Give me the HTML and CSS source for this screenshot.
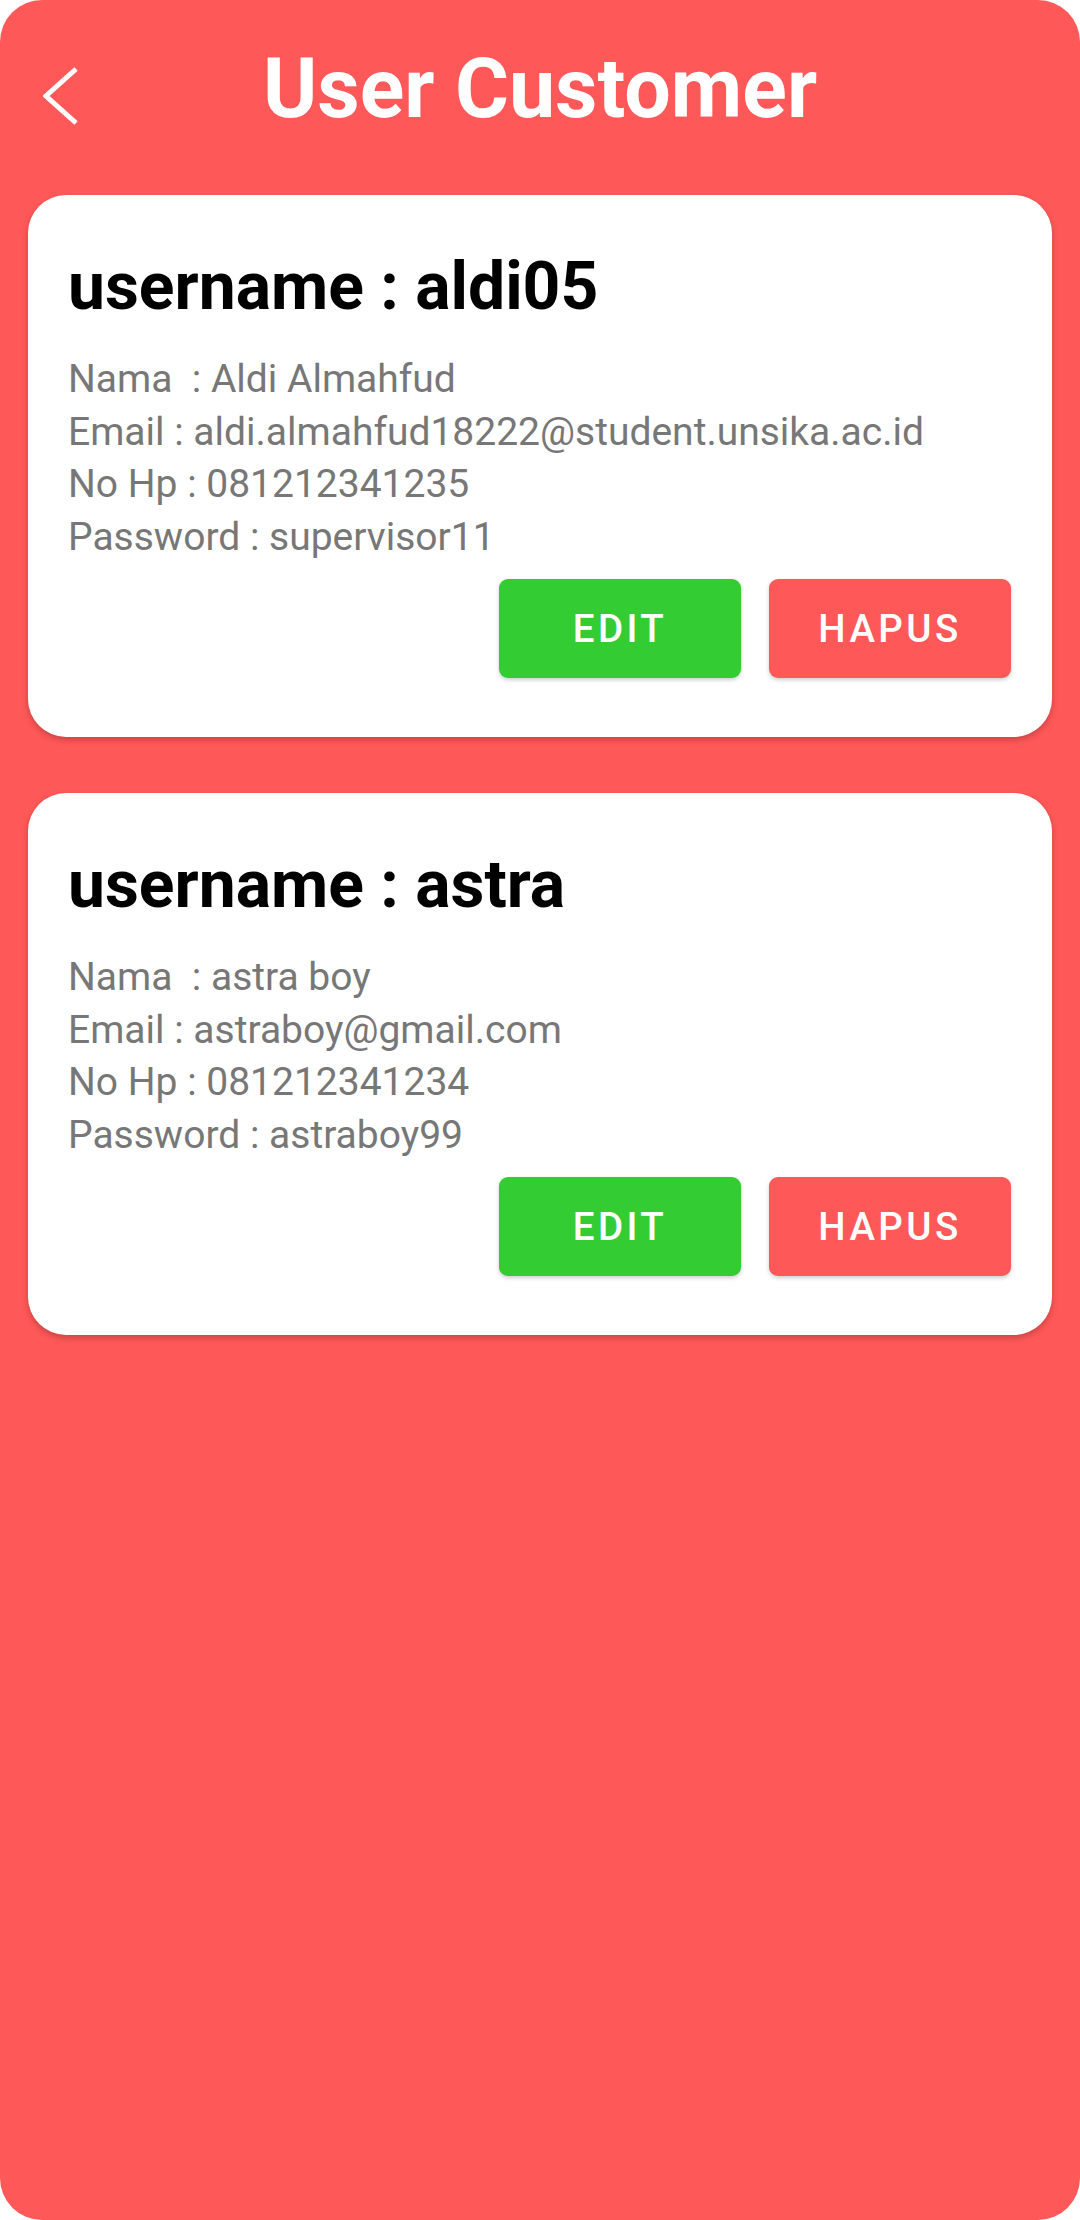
FILE: index.html
```html
<!DOCTYPE html>
<html lang="id">
<head>
<meta charset="utf-8">
<title>User Customer</title>
<link rel="stylesheet" href="styles.css">
</head>
<body>
<div class="screen">
  <header class="topbar">
    <div class="back">
      <svg width="40" height="60" viewBox="0 0 40 60" aria-hidden="true">
        <polyline points="33,2 3,29 33,56" fill="none" stroke="#fff" stroke-width="5" stroke-linejoin="miter" stroke-linecap="butt"/>
      </svg>
    </div>
    <h1 class="title">User Customer</h1>
    <div></div>
  </header>
  <main class="list">
    <section class="card">
      <h2 class="card-title">username : aldi05</h2>
      <div class="info">
        <p>Nama&nbsp; : Aldi Almahfud</p>
        <p>Email : aldi.almahfud18222@student.unsika.ac.id</p>
        <p>No Hp : 081212341235</p>
        <p>Password : supervisor11</p>
      </div>
      <div class="actions">
        <button class="btn btn-edit">EDIT</button>
        <button class="btn btn-hapus">HAPUS</button>
      </div>
    </section>
    <section class="card">
      <h2 class="card-title">username : astra</h2>
      <div class="info">
        <p>Nama&nbsp; : astra boy</p>
        <p>Email : astraboy@gmail.com</p>
        <p>No Hp : 081212341234</p>
        <p>Password : astraboy99</p>
      </div>
      <div class="actions">
        <button class="btn btn-edit">EDIT</button>
        <button class="btn btn-hapus">HAPUS</button>
      </div>
    </section>
  </main>
</div>
</body>
</html>
```
FILE: styles.css
```css
* { box-sizing: border-box; }
html, body {
  margin: 0;
  padding: 0;
  background: #ffffff;
}
body {
  font-family: Roboto, "Liberation Sans", sans-serif;
}
.screen {
  width: 1080px;
  height: 2220px;
  background: #ff5858;
  border-radius: 42px;
  overflow: hidden;
}
.topbar {
  display: grid;
  grid-template-columns: 1fr auto 1fr;
  align-items: start;
  padding-top: 40px;
}
.back {
  padding-left: 43px;
  padding-top: 27px;
  display: flex;
}
.back svg { display: block; }
.title {
  margin: 0;
  color: #ffffff;
  font-size: 82.5px;
  font-weight: 700;
  line-height: normal;
  text-align: center;
}
.list {
  display: flex;
  flex-direction: column;
  gap: 56px;
  padding: 58px 28px 0;
}
.card {
  background: #ffffff;
  border-radius: 38px;
  height: 542px;
  padding: 53px 41px 0 40px;
  box-shadow: 0 3px 6px rgba(0,0,0,0.22);
}
.card-title {
  margin: 0;
  font-size: 66px;
  font-weight: 700;
  color: #000000;
  line-height: normal;
}
.info {
  margin-top: 28px;
}
.info p {
  margin: 0;
  font-size: 39px;
  line-height: 52.7px;
  color: #777777;
  white-space: pre;
}
.actions {
  display: flex;
  justify-content: flex-end;
  gap: 28px;
  margin-top: 15px;
}
.btn {
  width: 242px;
  height: 99px;
  border: none;
  border-radius: 9px;
  color: #ffffff;
  font-family: Roboto, "Liberation Sans", sans-serif;
  font-size: 38.5px;
  font-weight: 500;
  letter-spacing: 3.4px;
  padding: 0;
  box-shadow: 0 2px 4px rgba(0,0,0,0.2);
}
.btn-edit { background: #33cd33; }
.btn-hapus { background: #ff5858; }
```
